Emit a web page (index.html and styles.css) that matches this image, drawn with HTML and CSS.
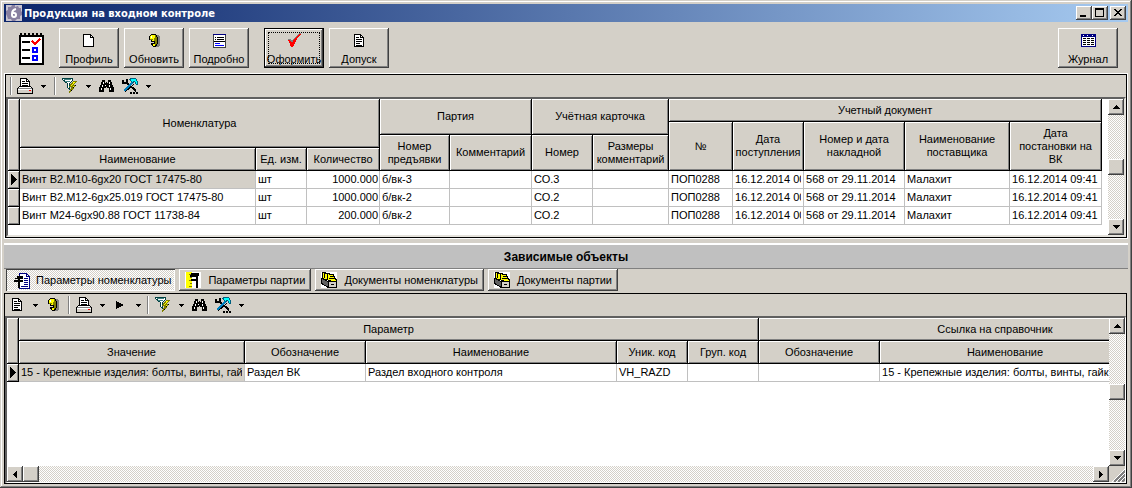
FILE: index.html
```html
<!DOCTYPE html>
<html lang="ru">
<head>
<meta charset="utf-8">
<title>Продукция на входном контроле</title>
<link rel="stylesheet" href="styles.css">
</head>
<body>
<svg class="defs" aria-hidden="true">
  <symbol id="i-page" viewBox="0 0 16 16"><path fill="#fff" stroke="#000" d="M2.500 1.500h7l3 3v9h-10z"/><path fill="none" stroke="#000" d="M9.500 1.500v3h3"/></symbol>
  <symbol id="i-doc" viewBox="0 0 16 16"><path fill="#fff" stroke="#000" d="M3.500 1.500h6l3 3v9h-9z"/><path fill="none" stroke="#000" d="M9.500 1.500v3h3M5 4.500h3M5 6.500h6M5 8.500h6M5 10.500h4M5 12h6"/></symbol>
  <symbol id="i-bell" viewBox="0 0 16 16"><path fill="#808080" d="M9 2h4v1h1v10h-1v1H8v-2z"/><path d="M5 1h5v1h1v2h1v7h-1v2h-1v1H7v-1H6v-1H5v-2h3V9H5V7H3V3h1V2h1z"/><path fill="#ff0" d="M5 2h4v2h1v7H9v2H7v-2h2V8H6V6H4V3h1z"/><path fill="#808000" d="M9 2h1v2h1v7h-1v1H9V8H8V5h1zM4 6h3v1H4z"/><path fill="#fff" d="M5 3h1v2H5z"/></symbol>
  <symbol id="i-detail" viewBox="0 0 16 16"><path fill="#fff" stroke="#404040" d="M2.500 1.500h12v13h-12z"/><path fill="#000080" d="M2 1h13v1H2z"/><path stroke="#000" d="M4 4.500h1M6 4.500h7M4 6.500h1M6 6.500h7M3 8.500h11"/><path stroke="#00f" d="M4 10.500h5M4 12.500h9"/></symbol>
  <symbol id="i-check" viewBox="0 0 16 16"><path fill="#808080" d="M0 7h3l3 3 5-7 5-3h-2l-4 3-4 5-2-2z"/><path fill="red" d="M1 7h3l2 3 3-5 5-4h1l-4 5-4 8H5L3 9z"/></symbol>
  <symbol id="i-journal" viewBox="0 0 16 16"><path fill="#fff" stroke="#000080" d="M1.500 1.500h14v12h-14z"/><path fill="#000080" d="M1 1h15v3H1z"/><path fill="#fff" d="M3 2h1v1H3zM7 2h1v1H7zM12 2h1v1h-1z"/><path stroke="#000" d="M3 5.500h3M7 5.500h3M11 5.500h3M3 7.500h3M7 7.500h3M11 7.500h3M3 9.500h3M7 9.500h3M11 9.500h3M3 11.500h3M7 11.500h3M11 11.500h3"/></symbol>
  <symbol id="i-print" viewBox="0 0 16 16"><path fill="#fff" stroke="#000" d="M3.500 8.500v-8h6l3 3v5"/><path fill="none" stroke="#000" d="M9.500 .5v3h3M5 3.500h3M5 5.500h6M5 7.500h6"/><path fill="#fff" stroke="#000" d="M2.500 8.500h11l2 2v5H.5v-5z"/><path stroke="#808080" d="M1 10.500h14"/><path fill="#d4d0c8" d="M1 12h14v3H1z"/><path fill="red" d="M12 12h2v1h-2z"/></symbol>
  <symbol id="i-filter" viewBox="0 0 16 16"><path fill="#fff" stroke="#004040" d="M.5.500h10v2l-3 3v6l-2-2v-4l-5-4z"/><path fill="#408080" d="M2 1h7v1H2zM3 3h5v1H3z"/><path fill="#ff0" stroke="#808000" d="M14.500 3.500h-3l-4 5h3l-3 6 6-7h-3z"/><path stroke="#000" d="M13 7.500h1M11 9.500h1M9 12.500h1"/></symbol>
  <symbol id="i-find" viewBox="0 0 16 16"><path d="M4 2h3v3h1V4h1v1h1V2h3v2h1v3h1v2h1v5h-5v-4H9V9H8v1H6v4H1V9h1V7h1V4h1z"/><path fill="#fff" d="M5 4h1v2H5zM4 7h1v2H4zM3 10h1v2H3zM11 4h1v2h-1zM11 7h1v2h-1zM12 10h1v2h-1zM7 7h1v1H7z"/></symbol>
  <symbol id="i-tools" viewBox="0 0 16 16"><path fill="none" stroke="#000" stroke-width="2" d="M1 2v3h4V1M5 5l9 8"/><path stroke="#0080c0" stroke-width="2" d="M11 4L2 13"/><path stroke="#000" d="M12 6L3 14"/><path fill="#00ffff" stroke="#006080" d="M7.500 1.500l2-1h4l2 3v3h-1l-2-3-2 1z"/><path d="M8 14h2v2H8zM11 14h2v2h-2zM14 14h2v2h-2z"/></symbol>
  <symbol id="i-play" viewBox="0 0 16 16"><path d="M4 4l8 4-8 4z"/></symbol>
  <symbol id="i-tabparam" viewBox="0 0 16 16"><path fill="#fff" stroke="#000080" d="M5.500.500h7l3 3v12h-10z"/><path fill="none" stroke="#000080" d="M12.500.500v3h3M10 5.500h4M10 7.500h4M10 9.500h4M10 11.500h4M7 13.500h7"/><path d="M3 3h6v3H6v1h3v2H6v6H4V9H0V7h4V6H1V5h2z"/></symbol>
  <symbol id="i-caliper" viewBox="0 0 16 16"><path fill="#fff" d="M0 0h16v16H0z"/><path fill="#ff0" d="M1 0h6v16H1z"/><path stroke="#808000" d="M4 2.500h3M5 5.500h2M4 8.500h3M5 11.500h2M4 14.500h3"/><path d="M6 1h8v3h-1v12h-2V9H6V7h5V5H5V3h1z"/></symbol>
  <symbol id="i-files" viewBox="0 0 16 16"><path fill="#fff" d="M0 0h16v16H0z"/><path fill="#ff0" stroke="#000" d="M1.500.500h3v1h4v1h4l1 4 2 1v3l-14-4z"/><path stroke="#000" d="M3.500 1v5M6.500 2v5M9 4.500h3M8 6.500h5"/><path fill="#606060" stroke="#000" d="M.5 6.500l7 3v6l-7-4z"/><path fill="#d4d0c8" stroke="#000" d="M7.500 9.500h8v6h-8z"/><path stroke="#000" d="M10 12.500h3"/></symbol>
  <symbol id="i-down" viewBox="0 0 7 4"><path d="M0 0h7v1H6v1H5v1H4v1H3V3H2V2H1V1H0z"/></symbol>
  <symbol id="i-drop" viewBox="0 0 5 3"><path d="M0 0h5v1H4v1H3v1H2V2H1V1H0z"/></symbol>
  <symbol id="i-up" viewBox="0 0 7 4"><path d="M3 0h1v1h1v1h1v1h1v1H0V3h1V2h1V1h1z"/></symbol>
  <symbol id="i-left" viewBox="0 0 4 7"><path d="M3 0h1v7H3V6H2V5H1V4H0V3h1V2h1V1h1z"/></symbol>
  <symbol id="i-right" viewBox="0 0 4 7"><path d="M0 0h1v1h1v1h1v1h1v1H3v1H2v1H1v1H0z"/></symbol>
  <symbol id="i-row" viewBox="0 0 6 11"><path d="M0 0h1v1h1v1h1v1h1v1h1v1h1v1H5v1H4v1H3v1H2v1H1v1H0z"/></symbol>
</svg>

<main class="window">
  <header class="titlebar">
    <svg class="appicon" viewBox="0 0 16 16"><path fill="#c8c4d0" d="M0 0h16v16H0z"/><path fill="#8880a0" d="M6 0h3v2l3-1 1 2h2v3l1 1v3l-2 1v3h-3l-2 2H6l-1-2H2l-1-3-1-2V6l2-1V2h3z"/><circle cx="8" cy="8" r="5" fill="#8880a0"/><path fill="none" stroke="#fff" stroke-width="2" d="M10 4Q6 5 6 9v1q0 2 2 2t2-2-2-2H7"/></svg>
    <h1>Продукция на входном контроле</h1>
    <div class="winbtns">
      <button type="button" aria-label="Свернуть"><svg width="10" height="10"><path d="M1 7h6v2H1z"/></svg></button>
      <button type="button" aria-label="Развернуть"><svg width="10" height="10"><path fill-rule="evenodd" d="M0 0h9v9H0zM1 2v6h7V2z"/></svg></button>
      <button type="button" class="close" aria-label="Закрыть"><svg width="10" height="10"><path d="M1 1h2v1h1v1h2V2h1V1h2v1H8v1H7v1H6v1h1v1h1v1h1v1H7V7H6V6H4v1H3v1H1V7h1V6h1V5h1V4H3V3H2V2H1z"/></svg></button>
    </div>
  </header>

  <nav class="actions">
    <svg class="notepad" viewBox="0 0 28 34"><path fill="#fff" stroke="#000" stroke-width="2" d="M2 4h23v28H2z"/><path stroke="#d4d0c8" stroke-width="3" d="M0 1.500h28"/><path stroke="#000" stroke-width="2" d="M3 1v4M7 1v4M11 1v4M15 1v4M19 1v4M23 1v4"/><path stroke="#000" stroke-width="2" d="M4 10h8M4 18h8M4 26h8"/><path fill="none" stroke="#00f" stroke-width="2" d="M15 16h4v4h-4zM15 24h4v4h-4z"/><path fill="none" stroke="red" stroke-width="2" d="M14 9l3 3 5-5"/></svg>
    <button type="button" class="big"><svg><use href="#i-page"/></svg>Профиль</button>
    <button type="button" class="big"><svg><use href="#i-bell"/></svg>Обновить</button>
    <button type="button" class="big"><svg><use href="#i-detail"/></svg>Подробно</button>
    <button type="button" class="big focused"><svg><use href="#i-check"/></svg>Оформить</button>
    <button type="button" class="big"><svg><use href="#i-doc"/></svg>Допуск</button>
    <button type="button" class="big last"><svg><use href="#i-journal"/></svg>Журнал</button>
  </nav>

  <section class="panel top" aria-label="Продукция">
    <div class="tools">
      <span class="sep"></span>
      <button type="button" aria-label="Печать"><svg><use href="#i-print"/></svg></button>
      <button type="button" class="drop" aria-label="Варианты печати"><svg><use href="#i-drop"/></svg></button>
      <span class="sep"></span>
      <button type="button" aria-label="Фильтр"><svg><use href="#i-filter"/></svg></button>
      <button type="button" class="drop" aria-label="Варианты фильтра"><svg><use href="#i-drop"/></svg></button>
      <button type="button" aria-label="Поиск"><svg><use href="#i-find"/></svg></button>
      <button type="button" aria-label="Настройка"><svg><use href="#i-tools"/></svg></button>
      <button type="button" class="drop" aria-label="Варианты настройки"><svg><use href="#i-drop"/></svg></button>
    </div>
    <div class="grid">
      <div class="view">
        <table class="products">
          <colgroup><col class="w12"><col class="w236"><col class="w51"><col class="w73"><col class="w70"><col class="w82"><col class="w61"><col class="w76"><col class="w64"><col class="w71"><col class="w101"><col class="w105"><col class="w92"></colgroup>
          <thead>
            <tr class="h23"><th rowspan="4"></th><th rowspan="3" colspan="3">Номенклатура</th><th rowspan="2" colspan="2">Партия</th><th rowspan="2" colspan="2">Учётная карточка</th><th colspan="5">Учетный документ</th></tr>
            <tr class="h13"><th rowspan="3">№</th><th rowspan="3">Дата поступления</th><th rowspan="3">Номер и дата накладной</th><th rowspan="3">Наименование поставщика</th><th rowspan="3">Дата<br>постановки на<br>ВК</th></tr>
            <tr class="h13"><th rowspan="2">Номер предъявки</th><th rowspan="2">Комментарий</th><th rowspan="2">Номер</th><th rowspan="2">Размеры комментарий</th></tr>
            <tr class="h23"><th>Наименование</th><th>Ед. изм.</th><th>Количество</th></tr>
          </thead>
          <tbody>
            <tr><th><svg class="mark"><use href="#i-row"/></svg></th><td class="sel">Винт В2.М10-6gx20 ГОСТ 17475-80</td><td>шт</td><td class="num">1000.000</td><td>б/вк-3</td><td></td><td>СО.3</td><td></td><td>ПОП0288</td><td><span class="clip">16.12.2014 00</span></td><td>568 от 29.11.2014</td><td>Малахит</td><td>16.12.2014 09:41</td></tr>
            <tr><th></th><td>Винт В2.М12-6gx25.019 ГОСТ 17475-80</td><td>шт</td><td class="num">1000.000</td><td>б/вк-2</td><td></td><td>СО.2</td><td></td><td>ПОП0288</td><td><span class="clip">16.12.2014 00</span></td><td>568 от 29.11.2014</td><td>Малахит</td><td>16.12.2014 09:41</td></tr>
            <tr><th></th><td>Винт М24-6gx90.88 ГОСТ 11738-84</td><td>шт</td><td class="num">200.000</td><td>б/вк-2</td><td></td><td>СО.2</td><td></td><td>ПОП0288</td><td><span class="clip">16.12.2014 00</span></td><td>568 от 29.11.2014</td><td>Малахит</td><td>16.12.2014 09:41</td></tr>
          </tbody>
        </table>
      </div>
      <div class="vscroll">
        <button type="button" aria-label="Вверх"><svg class="tri"><use href="#i-up"/></svg></button>
        <span class="space"></span><span class="thumb"></span><span class="space"></span>
        <button type="button" aria-label="Вниз"><svg class="tri"><use href="#i-down"/></svg></button>
      </div>
    </div>
  </section>

  <h2 class="banner">Зависимые объекты</h2>

  <nav class="tabs">
    <button type="button" class="active"><svg><use href="#i-tabparam"/></svg>Параметры номенклатуры</button>
    <button type="button"><svg><use href="#i-caliper"/></svg>Параметры партии</button>
    <button type="button"><svg><use href="#i-files"/></svg>Документы номенклатуры</button>
    <button type="button"><svg><use href="#i-files"/></svg>Документы партии</button>
  </nav>

  <section class="panel bottom" aria-label="Параметры номенклатуры">
    <div class="tools">
      <button type="button" aria-label="Документ"><svg><use href="#i-doc"/></svg></button>
      <button type="button" class="drop" aria-label="Варианты документа"><svg><use href="#i-drop"/></svg></button>
      <button type="button" aria-label="Обновить"><svg><use href="#i-bell"/></svg></button>
      <span class="sep"></span>
      <button type="button" aria-label="Печать"><svg><use href="#i-print"/></svg></button>
      <button type="button" class="drop" aria-label="Варианты печати"><svg><use href="#i-drop"/></svg></button>
      <button type="button" aria-label="Выполнить"><svg><use href="#i-play"/></svg></button>
      <button type="button" class="drop" aria-label="Варианты выполнения"><svg><use href="#i-drop"/></svg></button>
      <span class="sep"></span>
      <button type="button" aria-label="Фильтр"><svg><use href="#i-filter"/></svg></button>
      <button type="button" class="drop" aria-label="Варианты фильтра"><svg><use href="#i-drop"/></svg></button>
      <button type="button" aria-label="Поиск"><svg><use href="#i-find"/></svg></button>
      <button type="button" aria-label="Настройка"><svg><use href="#i-tools"/></svg></button>
      <button type="button" class="drop" aria-label="Варианты настройки"><svg><use href="#i-drop"/></svg></button>
    </div>
    <div class="grid">
      <div class="view">
        <table class="params">
          <colgroup><col class="w12"><col class="w226"><col class="w121"><col class="w251"><col class="w71"><col class="w71"><col class="w121"><col class="w251"><col class="w101"></colgroup>
          <thead>
            <tr class="h23"><th rowspan="2"></th><th colspan="5">Параметр</th><th colspan="3">Ссылка на справочник</th></tr>
            <tr class="h23"><th>Значение</th><th>Обозначение</th><th>Наименование</th><th>Уник. код</th><th>Груп. код</th><th>Обозначение</th><th>Наименование</th><th></th></tr>
          </thead>
          <tbody>
            <tr><th><svg class="mark"><use href="#i-row"/></svg></th><td class="sel"><span class="clip">15 - Крепежные изделия: болты, винты, гайк</span></td><td>Раздел ВК</td><td>Раздел входного контроля</td><td>VH_RAZD</td><td></td><td></td><td>15 - Крепежные изделия: болты, винты, гайк</td><td></td></tr>
          </tbody>
        </table>
      </div>
      <div class="vscroll">
        <button type="button" aria-label="Вверх"><svg class="tri"><use href="#i-up"/></svg></button>
        <span class="space"></span><span class="thumb"></span><span class="space"></span>
        <button type="button" aria-label="Вниз"><svg class="tri"><use href="#i-down"/></svg></button>
      </div>
      <div class="hscroll">
        <button type="button" aria-label="Влево"><svg class="side"><use href="#i-left"/></svg></button>
        <span class="thumb"></span><span class="space"></span>
        <button type="button" aria-label="Вправо"><svg class="side"><use href="#i-right"/></svg></button>
      </div>
      <svg class="grip" viewBox="0 0 16 16"><path stroke="#fff" d="M3 16L16 3M7 16l9-9M11 16l5-5"/><path stroke="#808080" stroke-width="2" d="M5 16L16 5M9 16l7-7M13 16l3-3"/></svg>
    </div>
  </section>
</main>
</body>
</html>
```
FILE: styles.css
```css
* { box-sizing: border-box; }
body {
  margin: 0;
  background: #d4d0c8;
  color: #000;
  font: 11px/13px "Liberation Sans", Arial, sans-serif;
}
svg { display: block; flex: none; width: 16px; height: 16px; shape-rendering: crispEdges; }
.defs { position: absolute; width: 0; height: 0; }
button { font: inherit; color: inherit; margin: 0; padding: 0; border: 0; background: #d4d0c8; }
h1, h2 { margin: 0; font-size: 11px; line-height: 13px; }

.window {
  display: flex;
  flex-direction: column;
  height: 100vh;
  padding: 4px;
  box-shadow: inset -1px -1px #404040, inset 1px 1px #d4d0c8, inset -2px -2px #808080, inset 2px 2px #fff;
}

.titlebar {
  display: flex;
  align-items: center;
  height: 18px;
  padding: 0 2px;
  gap: 2px;
  background: linear-gradient(to right, #0a246a, #a6caf0);
  color: #fff;
}
.titlebar h1 { flex: 1; font-family: "DejaVu Sans Condensed", "Noto Sans", sans-serif; }
.appicon { shape-rendering: auto; }
.winbtns { display: flex; }
.winbtns button { width: 16px; height: 14px; padding: 2px 3px; }
.winbtns .close { margin-left: 2px; }
.winbtns svg { width: 10px; height: 10px; }
.winbtns button, .vscroll button, .hscroll button, .thumb {
  background: #d4d0c8;
  box-shadow: inset -1px -1px #404040, inset 1px 1px #fff, inset -2px -2px #808080;
}

.actions { display: flex; gap: 5px; padding: 6px 10px 5px 14px; }
.notepad { width: 28px; height: 34px; margin: 4px 8px 0 0; }
.big {
  display: flex;
  flex-direction: column;
  align-items: center;
  gap: 4px;
  width: 60px;
  height: 40px;
  padding-top: 5px;
  box-shadow: inset -1px -1px #404040, inset 1px 1px #fff, inset -2px -2px #808080;
}
.big.focused {
  margin-left: 10px;
  border: 1px solid #000;
  padding-top: 4px;
  outline: 1px dotted #000;
  outline-offset: -5px;
}
.big.last { margin-left: auto; }

.panel { display: flex; flex-direction: column; }
.panel.top { border: 1px solid #000; outline: 1px solid #fff; margin: 1px 1px 0; }
.panel.bottom { flex: 1; min-height: 0; border: 1px solid #000; margin: 1px 1px 0 0; }
.tools { display: flex; align-items: center; height: 22px; }
.top .tools { padding-left: 4px; }
.tools button { display: flex; align-items: center; justify-content: center; width: 24px; height: 20px; }
.tools .drop { width: 12px; }
.tools .drop svg { width: 5px; height: 3px; }
.sep { width: 2px; height: 18px; border-left: 1px solid #808080; border-right: 1px solid #fff; margin: 0 2px 0 3px; }
.top .sep { margin-left: 5px; }
.top .sep:first-child { margin-left: 0; margin-right: 1px; }

.grid {
  display: grid;
  grid-template-columns: minmax(0, 1fr) 16px;
  grid-template-rows: minmax(0, 1fr) auto;
  border: 1px solid;
  border-color: #808080 #fff #fff #808080;
  background: #fff;
}
.top .grid { border-width: 2px; border-color: #606060 #e4e2dc #e4e2dc #606060; height: 140px; }
.bottom .grid { flex: 1; min-height: 0; border-top: 2px solid #606060; border-left: 2px solid #606060; }
.view { overflow: hidden; }

table { table-layout: fixed; border-collapse: separate; border-spacing: 0; }
.products { width: 1094px; }
.params { width: 1225px; }
.w12 { width: 12px; }
.w51 { width: 51px; }
.w61 { width: 61px; }
.w64 { width: 64px; }
.w70 { width: 70px; }
.w71 { width: 71px; }
.w73 { width: 73px; }
.w76 { width: 76px; }
.w82 { width: 82px; }
.w92 { width: 92px; }
.w101 { width: 101px; }
.w105 { width: 105px; }
.w121 { width: 121px; }
.w226 { width: 226px; }
.w236 { width: 236px; }
.w251 { width: 251px; }
.h13 { height: 13px; }
.h23 { height: 23px; }
th {
  padding: 0;
  background: #d4d0c8;
  border-right: 1px solid #000;
  border-bottom: 1px solid #000;
  box-shadow: inset 1px 1px #fff, inset -1px -1px #808080;
  font-weight: normal;
  text-align: center;
  vertical-align: middle;
}
tbody tr { height: 18px; }
td {
  height: 18px;
  padding: 0 2px;
  border-right: 1px solid #c0c0c0;
  border-bottom: 1px solid #c0c0c0;
  overflow: hidden;
  white-space: nowrap;
}
td.num { text-align: right; padding-right: 1px; }
td.sel { background: #d4d0c8; }
.clip { display: block; overflow: hidden; }
.mark { width: 6px; height: 11px; margin: 0 auto; }

.vscroll, .hscroll {
  display: flex;
  background: repeating-conic-gradient(#d4d0c8 0 25%, #fff 0 50%) 0 0 / 2px 2px;
}
.vscroll { flex-direction: column; }
.vscroll button, .hscroll button, .thumb { display: flex; align-items: center; justify-content: center; width: 16px; height: 16px; }
.space { flex: 1; }
.tri { width: 7px; height: 4px; }
.side { width: 4px; height: 7px; }
.grip { background: #d4d0c8; }

.banner {
  margin-top: 5px;
  padding: 6px 0;
  height: 26px;
  border-top: 2px solid #fff;
  border-bottom: 1px solid #808080;
  background: #c0c0c0;
  text-align: center;
  font-size: 12px;
}

.tabs { display: flex; gap: 4px; padding: 0 2px 1px; }
.tabs button {
  display: flex;
  align-items: center;
  gap: 7px;
  height: 22px;
  padding: 0 6px;
  box-shadow: inset -1px -1px #404040, inset 1px 1px #fff, inset -2px -2px #808080;
}
.tabs .active {
  gap: 6px;
  padding: 1px 4px 0 8px;
  background: repeating-conic-gradient(#d4d0c8 0 25%, #fff 0 50%) 0 0 / 2px 2px;
  box-shadow: inset 1px 1px #404040, inset -1px -1px #fff;
}
```
